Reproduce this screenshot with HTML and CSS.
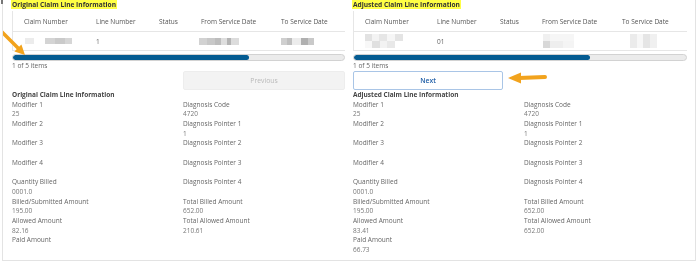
FILE: index.html
```html
<!DOCTYPE html>
<html lang="en">
<head>
  <meta charset="UTF-8">
  <title>Claim Line Comparison</title>
  <link rel="stylesheet" href="styles.css">
</head>
<body>

<div class="page">
  <span class="corner-mark"></span>

  <section class="panel">
    <h2 class="panel-title"><mark>Original Claim Line Information</mark></h2>
    <div class="lines">
      <div class="lines-row lines-head">
        <div>Claim Number</div>
        <div>Line Number</div>
        <div>Status</div>
        <div>From Service Date</div>
        <div>To Service Date</div>
      </div>
      <div class="lines-row">
        <div><span class="blur blur-claim-o"></span></div>
        <div>1</div>
        <div></div>
        <div><span class="blur blur-from-o"></span></div>
        <div><span class="blur blur-to-o"></span></div>
      </div>
    </div>
    <div class="scroll"><div class="scroll-thumb"></div></div>
    <div class="count">1 of 5 items</div>
    <div class="pager">
      <span></span>
      <button class="pager-btn" disabled>Previous</button>
    </div>

    <h3 class="detail-title">Original Claim Line Information</h3>
    <div class="detail">
      <dl class="detail-col">
        <dt>Modifier 1</dt><dd>25</dd>
        <dt>Modifier 2</dt><dd></dd>
        <dt>Modifier 3</dt><dd></dd>
        <dt>Modifier 4</dt><dd></dd>
        <dt>Quantity Billed</dt><dd>0001.0</dd>
        <dt>Billed/Submitted Amount</dt><dd>195.00</dd>
        <dt>Allowed Amount</dt><dd>82.16</dd>
        <dt>Paid Amount</dt><dd></dd>
      </dl>
      <dl class="detail-col">
        <dt>Diagnosis Code</dt><dd>4720</dd>
        <dt>Diagnosis Pointer 1</dt><dd>1</dd>
        <dt>Diagnosis Pointer 2</dt><dd></dd>
        <dt>Diagnosis Pointer 3</dt><dd></dd>
        <dt>Diagnosis Pointer 4</dt><dd></dd>
        <dt>Total Billed Amount</dt><dd>652.00</dd>
        <dt>Total Allowed Amount</dt><dd>210.61</dd>
      </dl>
    </div>
  </section>

  <section class="panel">
    <h2 class="panel-title"><mark>Adjusted Claim Line Information</mark></h2>
    <div class="lines">
      <div class="lines-row lines-head">
        <div>Claim Number</div>
        <div>Line Number</div>
        <div>Status</div>
        <div>From Service Date</div>
        <div>To Service Date</div>
      </div>
      <div class="lines-row">
        <div><span class="blur blur-claim-a"></span></div>
        <div>01</div>
        <div></div>
        <div><span class="blur blur-from-a"></span></div>
        <div><span class="blur blur-to-a"></span></div>
      </div>
    </div>
    <div class="scroll"><div class="scroll-thumb"></div></div>
    <div class="count">1 of 5 items</div>
    <div class="pager">
      <button class="pager-btn next">Next</button>
    </div>

    <h3 class="detail-title">Adjusted Claim Line Information</h3>
    <div class="detail">
      <dl class="detail-col">
        <dt>Modifier 1</dt><dd>25</dd>
        <dt>Modifier 2</dt><dd></dd>
        <dt>Modifier 3</dt><dd></dd>
        <dt>Modifier 4</dt><dd></dd>
        <dt>Quantity Billed</dt><dd>0001.0</dd>
        <dt>Billed/Submitted Amount</dt><dd>195.00</dd>
        <dt>Allowed Amount</dt><dd>83.41</dd>
        <dt>Paid Amount</dt><dd>66.73</dd>
      </dl>
      <dl class="detail-col">
        <dt>Diagnosis Code</dt><dd>4720</dd>
        <dt>Diagnosis Pointer 1</dt><dd>1</dd>
        <dt>Diagnosis Pointer 2</dt><dd></dd>
        <dt>Diagnosis Pointer 3</dt><dd></dd>
        <dt>Diagnosis Pointer 4</dt><dd></dd>
        <dt>Total Billed Amount</dt><dd>652.00</dd>
        <dt>Total Allowed Amount</dt><dd>652.00</dd>
      </dl>
    </div>
  </section>

  <!-- callout arrows drawn over the screenshot -->
  <svg class="arrow arrow-down" width="26" height="30" viewBox="0 30 26 30">
    <line x1="-1" y1="32" x2="15" y2="48" stroke="#f2a31d" stroke-width="3.5" stroke-linecap="round"/>
    <polygon points="22,55 18.4,44.4 11.4,51.4" fill="#f2a31d"/>
  </svg>
  <svg class="arrow arrow-left" width="44" height="16" viewBox="502 70 44 16">
    <line x1="516" y1="78" x2="542" y2="77" stroke="#f2a31d" stroke-width="4" stroke-linecap="round"/>
    <polygon points="505,78 518,72.5 518,83.5" fill="#f2a31d"/>
  </svg>
</div>

</body>
</html>
```

FILE: styles.css
```css
body {
  margin: 0;
  background: #fff;
  font-family: "Open Sans", "Liberation Sans", sans-serif;
  color: #666;
  -webkit-font-smoothing: antialiased;
}

.page {
  position: relative;
  margin-left: 2px;
  width: 675px;
  height: 260px;
  padding: 0 8px 0 9px;
  border-left: 1px solid #e3e3e3;
  border-right: 1px solid #e3e3e3;
  border-bottom: 1px solid #e3e3e3;
  display: grid;
  grid-template-columns: 333px 334px;
  gap: 8px;
  transform: translateZ(0);
}

.corner-mark {
  position: absolute;
  left: -2px;
  top: 0;
  width: 2px;
  height: 4px;
  background: #777;
}

.panel-title {
  margin: 0 0 0 -1px;
  font-size: 6.6px;
  line-height: 10px;
  font-weight: 700;
}

.panel-title mark {
  background: #ffff45;
  color: #333;
  padding: 0 1px;
}

.lines {
  margin-top: 1px;
  border-left: 1px solid #e6e6e6;
}

.lines-row {
  display: grid;
  grid-template-columns: 71px 63px 42px 80px 1fr;
  height: 18px;
  align-items: center;
  border-bottom: 1px solid #e6e6e6;
  font-size: 6.5px;
  color: #666;
}

.lines-head {
  height: 20px;
  color: #555;
}

.lines-row > div {
  padding-left: 12px;
}

.lines-row > div:first-child {
  padding-left: 11px;
}

.blur {
  display: block;
}

.blur-claim-o {
  width: 47px;
  height: 6px;
  margin-left: 1px;
  background: linear-gradient(to right, #ececec 0 9px, #fff 9px 20px, #d4d4d4 20px 30px, #cacaca 30px 40px, #d6d6d6 40px 47px);
}

.blur-from-o {
  width: 40px;
  height: 7px;
  margin-left: -2px;
  background: linear-gradient(to right, #d2d2d2 0 8px, #c8c8c8 8px 16px, #bdbdbd 16px 22px, #dedede 22px 28px, #b4b4b4 28px 32px, #dcdcdc 32px 40px);
}

.blur-to-o {
  width: 33px;
  height: 7px;
  background: linear-gradient(to right, #cfcfcf 0 6px, #bfbfbf 6px 11px, #ececec 11px 20px, #b0b0b0 20px 27px, #c9c9c9 27px 33px);
}

.blur-claim-a {
  width: 47px;
  height: 14px;
  background:
    linear-gradient(to right, #e2e2e2 0 7px, #f3f3f3 7px 14px, #e6e6e6 14px 22px, #f6f6f6 22px 30px, #e4e4e4 30px 38px, #fff 38px 47px) top / 100% 7px no-repeat,
    linear-gradient(to right, #f8f8f8 0 7px, #e0e0e0 7px 15px, #f2f2f2 15px 22px, #e8e8e8 22px 30px, #fff 30px 47px) bottom / 100% 7px no-repeat;
}

.blur-from-a {
  width: 31px;
  height: 14px;
  margin-left: 1px;
  background:
    linear-gradient(to right, #f0f0f0 0 7px, #f6f6f6 7px 31px) top / 100% 7px no-repeat,
    linear-gradient(to right, #d8d8d8 0 7px, #eeeeee 7px 20px, #f4f4f4 20px 31px) bottom / 100% 7px no-repeat;
}

.blur-to-a {
  width: 27px;
  height: 14px;
  margin-left: 8px;
  background: linear-gradient(to right, #ebebeb 0 7px, #f7f7f7 7px 13px, #e5e5e5 13px 20px, #f0f0f0 20px 27px);
}

.scroll {
  margin-top: 3px;
  height: 5px;
  border: 1px solid #d2d2d2;
  border-radius: 4px;
  background: #ebebeb;
  overflow: hidden;
}

.scroll-thumb {
  width: 236px;
  height: 100%;
  background: #055c92;
  border-radius: 4px;
}

.count {
  font-size: 6.5px;
  line-height: 10px;
  color: #666;
}

.pager {
  display: grid;
  grid-template-columns: 171px 1fr;
  height: 19px;
}

.pager-btn {
  font-family: inherit;
  font-size: 6.8px;
  border-radius: 2px;
  padding: 0;
  cursor: pointer;
}

.pager-btn:disabled {
  background: #f3f3f3;
  border: 1px solid #ededed;
  color: #b9b9b9;
  cursor: default;
}

.pager-btn.next {
  width: 150px;
  background: #fff;
  border: 1px solid #a9c5e6;
  color: #2461a8;
  font-weight: 600;
}

.detail-title {
  margin: 0;
  font-size: 6.5px;
  line-height: 9.7px;
  font-weight: 700;
  color: #444;
}

.detail {
  display: grid;
  grid-template-columns: 171px 1fr;
}

.detail-col {
  margin: 0;
  font-size: 6.5px;
  line-height: 9.7px;
}

.detail-col dt {
  color: #666;
}

.detail-col dd {
  margin: 0;
  height: 9.7px;
  color: #777;
}

.arrow {
  position: absolute;
}

.arrow-down {
  left: 0;
  top: 30px;
}

.arrow-left {
  left: 502px;
  top: 70px;
}
```
